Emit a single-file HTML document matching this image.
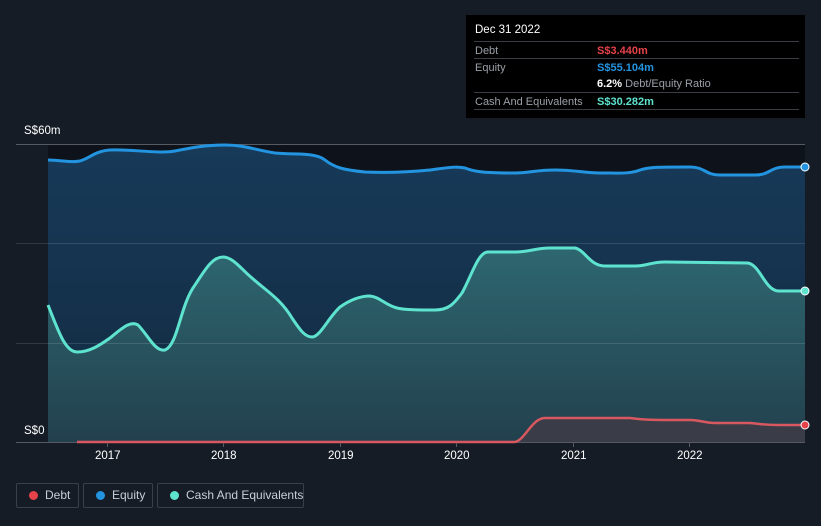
<!DOCTYPE html>
<html style="width:821px;height:526px;overflow:hidden"><head><meta charset="utf-8"><style>
body{margin:0;width:821px;height:526px;background:#161c26;font-family:"Liberation Sans",sans-serif;overflow:hidden;position:relative}
.tt{position:absolute;left:466px;top:15px;width:339px;height:103px;background:#000;color:#fff;font-size:11px}
.tt .h{position:absolute;left:9px;top:9px;font-size:11.5px}
.row{position:absolute;left:8px;width:325px;border-top:1px solid #3a3d43;height:17px}
.row span{position:absolute;top:3px;white-space:nowrap}
.l{left:1px;color:#9aa0a8}.v{left:123px;font-weight:bold}
.leg{position:absolute;top:483px;height:25px;border:1px solid #3a3f48;border-radius:2px;color:#c9ced6;font-size:12px;box-sizing:border-box;line-height:23px;white-space:nowrap}
.leg i{position:absolute;left:12px;top:7px;width:9px;height:9px;border-radius:50%}
.leg span{position:absolute;left:28px}
.ax{position:absolute;color:#fff;font-size:11.5px}
</style></head><body>
<svg width="821" height="526" style="position:absolute;left:0;top:0">
<defs>
<linearGradient id="eg" x1="0" y1="0" x2="0" y2="1"><stop offset="0" stop-color="#173a59"/><stop offset="1" stop-color="#132a40"/></linearGradient>
<linearGradient id="cg" x1="0" y1="0" x2="0" y2="1"><stop offset="0" stop-color="#2e6770"/><stop offset="1" stop-color="#22404d"/></linearGradient>
</defs>
<rect x="48" y="144" width="757" height="298" fill="#0e121a"/>
<path d="M48,160 C60,160 70,163 80,161 C90,158 95,151 110,150 C130,149 160,154 175,151 C190,148 205,145 225,145 C245,145 255,150 275,153 C295,155 315,152 325,160 C335,168 345,170 365,172 C390,173 410,172 430,170 C445,168 455,166 465,168 C475,172 485,173 515,173 C530,173 535,170 555,170 C575,170 585,173 600,173 C620,173 630,174 640,170 C650,167 655,167 690,167 C705,167 705,175 720,175 L755,175 C770,175 770,167 785,167 L805,167 L805,442 L48,442 Z" fill="url(#eg)"/>
<path d="M48,305 C58,330 65,352 77,352 C90,352 100,345 110,338 C120,330 130,320 138,325 C148,335 155,352 165,350 C178,345 180,305 195,285 C205,270 212,257 223,257 C233,257 242,270 252,278 C265,290 280,298 292,318 C300,330 305,337 312,337 C320,337 328,318 340,307 C350,300 360,296 370,296 C380,297 385,305 397,308 C405,310 420,310 435,310 C450,310 455,302 462,293 C472,275 478,252 488,252 L515,252 C530,252 535,248 550,248 L575,248 C585,250 590,266 605,266 L635,266 C648,266 650,262 665,262 L748,263 C760,265 765,290 778,291 L805,291 L805,442 L48,442 Z" fill="url(#cg)"/>
<path d="M515,442 C525,440 532,418 545,418 L630,418 C645,420 650,420 690,420 C700,420 705,423 715,423 L750,423 C760,424 765,425 778,425 L805,425 L805,442 Z" fill="#3a3d48"/>
<g stroke="#ffffff" stroke-opacity="0.12" stroke-width="1"><line x1="16" y1="243.5" x2="805" y2="243.5"/><line x1="16" y1="343.5" x2="805" y2="343.5"/></g>
<line x1="16" y1="144.5" x2="805" y2="144.5" stroke="#555a63"/>
<line x1="16" y1="442.5" x2="805" y2="442.5" stroke="#555a63"/>
<path d="M48,160 C60,160 70,163 80,161 C90,158 95,151 110,150 C130,149 160,154 175,151 C190,148 205,145 225,145 C245,145 255,150 275,153 C295,155 315,152 325,160 C335,168 345,170 365,172 C390,173 410,172 430,170 C445,168 455,166 465,168 C475,172 485,173 515,173 C530,173 535,170 555,170 C575,170 585,173 600,173 C620,173 630,174 640,170 C650,167 655,167 690,167 C705,167 705,175 720,175 L755,175 C770,175 770,167 785,167 L805,167" fill="none" stroke="#2394e0" stroke-width="3"/>
<path d="M48,305 C58,330 65,352 77,352 C90,352 100,345 110,338 C120,330 130,320 138,325 C148,335 155,352 165,350 C178,345 180,305 195,285 C205,270 212,257 223,257 C233,257 242,270 252,278 C265,290 280,298 292,318 C300,330 305,337 312,337 C320,337 328,318 340,307 C350,300 360,296 370,296 C380,297 385,305 397,308 C405,310 420,310 435,310 C450,310 455,302 462,293 C472,275 478,252 488,252 L515,252 C530,252 535,248 550,248 L575,248 C585,250 590,266 605,266 L635,266 C648,266 650,262 665,262 L748,263 C760,265 765,290 778,291 L805,291" fill="none" stroke="#5ee3cf" stroke-width="3"/>
<path d="M77,442 L515,442 C525,440 532,418 545,418 L630,418 C645,420 650,420 690,420 C700,420 705,423 715,423 L750,423 C760,424 765,425 778,425 L805,425" fill="none" stroke="#d9585f" stroke-width="2.5"/>
<circle cx="805" cy="167" r="4" fill="#2394e0" stroke="#fff" stroke-width="1"/>
<circle cx="805" cy="291" r="4" fill="#5ee3cf" stroke="#fff" stroke-width="1"/>
<circle cx="805" cy="425" r="4" fill="#e5424a" stroke="#fff" stroke-width="1"/>
<g stroke="#555a63"><line x1="107.5" y1="443" x2="107.5" y2="447"/><line x1="223.5" y1="443" x2="223.5" y2="447"/><line x1="340.5" y1="443" x2="340.5" y2="447"/><line x1="456.5" y1="443" x2="456.5" y2="447"/><line x1="573.5" y1="443" x2="573.5" y2="447"/><line x1="689.5" y1="443" x2="689.5" y2="447"/></g>
</svg>
<div class="ax" style="left:24px;top:125px">S$60m</div>
<div class="ax" style="left:24px;top:425px">S$0</div>
<div class="ax" style="left:95px;top:450px">2017</div>
<div class="ax" style="left:211px;top:450px">2018</div>
<div class="ax" style="left:328px;top:450px">2019</div>
<div class="ax" style="left:444px;top:450px">2020</div>
<div class="ax" style="left:561px;top:450px">2021</div>
<div class="ax" style="left:677px;top:450px">2022</div>
<div class="tt">
<div class="h">Dec 31 2022</div>
<div class="row" style="top:26px"><span class="l">Debt</span><span class="v" style="color:#e5424a">S$3.440m</span></div>
<div class="row" style="top:43px"><span class="l">Equity</span><span class="v" style="color:#2394e0">S$55.104m</span></div>
<div class="row" style="top:60px;border-top:none"><span class="v" style="color:#fff">6.2% <b style="font-weight:normal;color:#9aa0a8">Debt/Equity Ratio</b></span></div>
<div class="row" style="top:77px"><span class="l">Cash And Equivalents</span><span class="v" style="color:#5ee3cf">S$30.282m</span></div>
<div class="row" style="top:94px;height:0"></div>
</div>
<div class="leg" style="left:16px;width:63px"><i style="background:#e5424a"></i><span>Debt</span></div>
<div class="leg" style="left:83px;width:70px"><i style="background:#2394e0"></i><span>Equity</span></div>
<div class="leg" style="left:157px;width:147px"><i style="background:#5ee3cf"></i><span>Cash And Equivalents</span></div>
</body></html>
